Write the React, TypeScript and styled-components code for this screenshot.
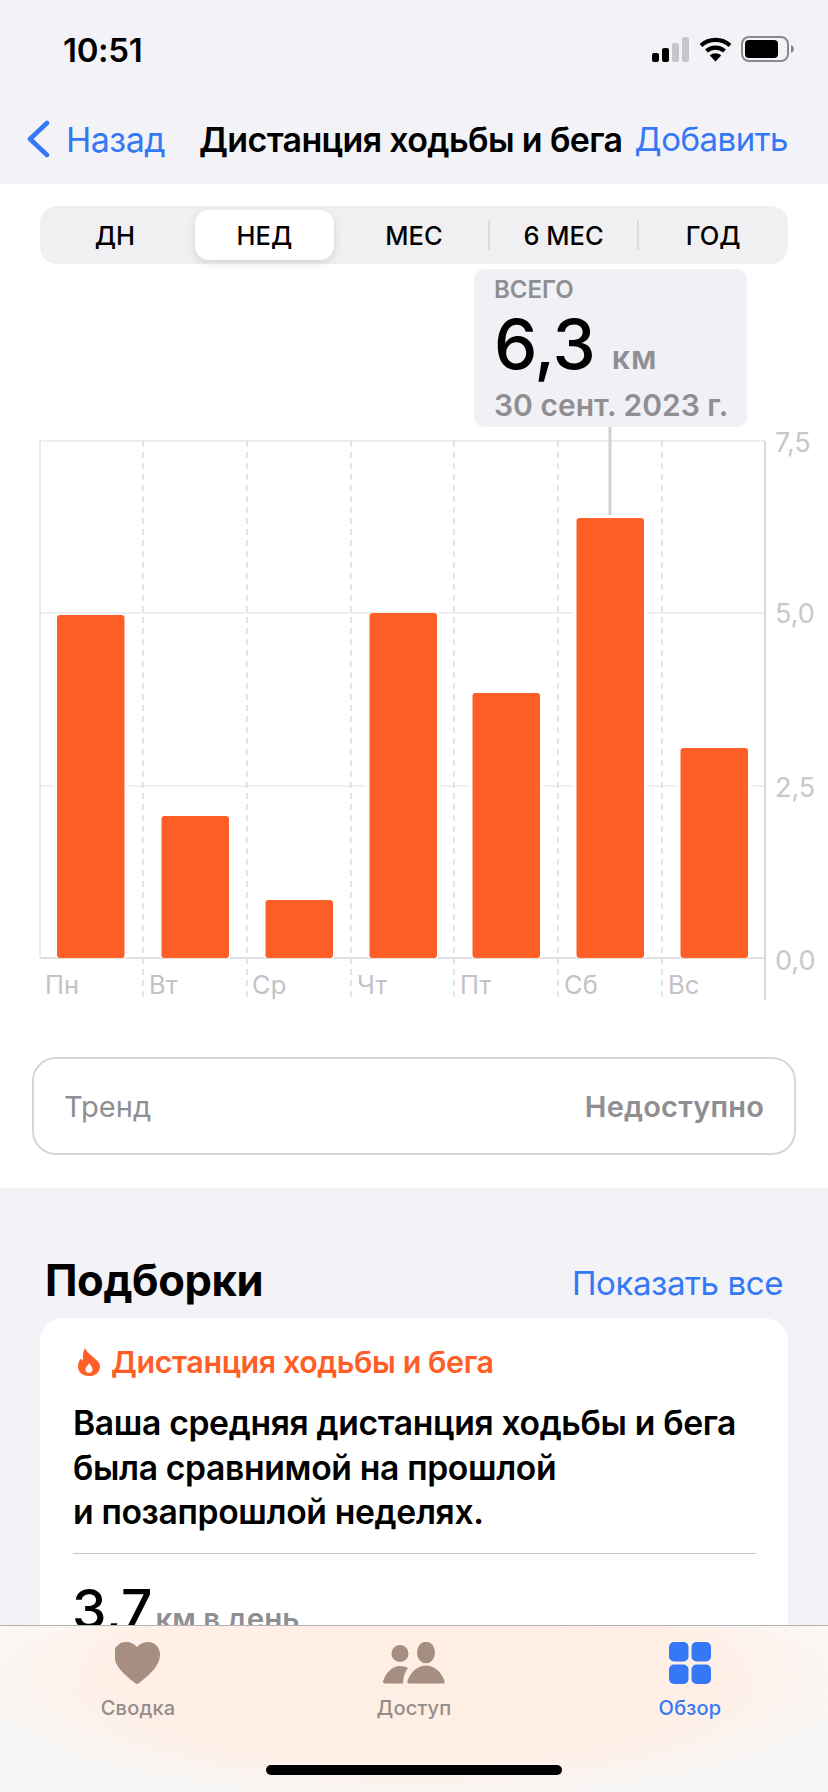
import React from "react";
import styled, { createGlobalStyle } from "styled-components";

const Global = createGlobalStyle`
  html, body { margin: 0; padding: 0; background: #f2f2f7; }
  * { box-sizing: border-box; }
`;

const font = `Inter, "Liberation Sans", sans-serif`;
const BLUE = "#3478f6";
const ORANGE = "#ff5e26";

const Page = styled.div`
  position: relative;
  width: 828px;
  height: 1792px;
  overflow: hidden;
  background: #f2f2f7;
  font-family: ${font};
  color: #000;
`;
const StatusBar = styled.div`
  height: 100px;
  padding: 0 33px 0 63px;
  display: flex;
  align-items: center;
  justify-content: space-between;
`;
const Time = styled.div`
  font-size: 33px;
  font-weight: 600;
  letter-spacing: -0.3px;
  margin-top: -1px;
`;
const StatusIcons = styled.div`
  display: flex;
  align-items: center;
  gap: 9px;
  margin-top: -2px;
`;
const NavBar = styled.div`
  height: 84px;
  padding: 0 40px 6px 26px;
  display: flex;
  align-items: center;
`;
const BackLink = styled.div`
  display: flex;
  align-items: center;
  gap: 16px;
  width: 173px;
  color: ${BLUE};
  font-size: 34px;
  letter-spacing: -0.5px;
`;
const NavTitle = styled.div`
  flex: 1;
  font-size: 34px;
  font-weight: 600;
  letter-spacing: -0.65px;
  white-space: nowrap;
`;
const NavAction = styled.div`
  color: ${BLUE};
  font-size: 33px;
  letter-spacing: -0.5px;
  white-space: nowrap;
`;
const Panel = styled.div`
  background: #fff;
  height: 1004px;
  padding-top: 22px;
`;
const Segmented = styled.div`
  margin: 0 40px;
  height: 58px;
  border-radius: 17px;
  background: #f0f0f2;
  display: grid;
  grid-template-columns: repeat(5, 1fr);
`;
const Segment = styled.div<{ $active?: boolean; $divider?: boolean }>`
  position: relative;
  margin: 4px 5px;
  display: flex;
  align-items: center;
  justify-content: center;
  font-size: 25.5px;
  font-weight: 500;
  border-radius: 14px;
  background: ${(p) => (p.$active ? "#fff" : "transparent")};
  box-shadow: ${(p) => (p.$active ? "0 3px 8px rgba(0,0,0,0.12)" : "none")};
  &::before {
    content: "";
    display: ${(p) => (p.$divider ? "block" : "none")};
    position: absolute;
    left: -6px;
    top: 10px;
    bottom: 10px;
    width: 2px;
    background: #dcdce0;
  }
`;
const ChartArea = styled.div`
  position: relative;
  height: 740px;
`;
const ChartSvg = styled.svg`
  display: block;
  width: 828px;
  height: 740px;
  font-family: ${font};
`;
const Tooltip = styled.div`
  position: absolute;
  left: 474px;
  top: 5px;
  width: 273px;
  height: 158px;
  border-radius: 10px;
  background: #f1f1f5;
  padding: 7px 20px 0;
`;
const TooltipLabel = styled.div`
  font-size: 24px;
  font-weight: 600;
  color: #8e8e93;
  line-height: 28px;
`;
const TooltipValueRow = styled.div`
  display: flex;
  align-items: baseline;
  gap: 17px;
  height: 78px;
  margin-top: 1px;
  line-height: 78px;
`;
const TooltipValue = styled.span`
  font-size: 69px;
  font-weight: 500;
  letter-spacing: -1px;
`;
const TooltipUnit = styled.span`
  font-size: 32px;
  font-weight: 600;
  color: #8e8e93;
  letter-spacing: 1px;
`;
const TooltipDate = styled.div`
  font-size: 30px;
  font-weight: 600;
  color: #8e8e93;
  line-height: 38px;
  margin-top: 3px;
  white-space: nowrap;
`;
const TrendCard = styled.div`
  margin: 53px 32px 0;
  height: 98px;
  border: 2px solid #d6d6da;
  border-radius: 24px;
  padding: 0 30px;
  display: flex;
  align-items: center;
  justify-content: space-between;
  font-size: 29px;
  color: #8e8e93;
`;
const TrendValue = styled.span`
  font-weight: 600;
  letter-spacing: 0.2px;
`;
const SectionHeader = styled.div`
  padding: 60px 45px 0;
  height: 130px;
  display: flex;
  align-items: center;
  justify-content: space-between;
`;
const SectionTitle = styled.div`
  font-size: 43.5px;
  font-weight: 700;
  letter-spacing: -0.4px;
  margin-top: -6px;
`;
const SectionLink = styled.div`
  font-size: 33px;
  color: ${BLUE};
  letter-spacing: -0.4px;
`;
const Card = styled.div`
  margin: 0 40px;
  height: 500px;
  background: #fff;
  border-radius: 24px;
  padding: 25px 32px 0 33px;
`;
const CardHeading = styled.div`
  display: flex;
  align-items: center;
  gap: 11px;
  margin-left: 5px;
  height: 38px;
  color: ${ORANGE};
  font-size: 30.4px;
  font-weight: 600;
  letter-spacing: -0.4px;
`;
const CardBody = styled.div`
  margin-top: 20px;
  font-size: 33.7px;
  font-weight: 600;
  line-height: 44.5px;
  letter-spacing: -0.35px;
  padding-bottom: 18px;
  border-bottom: 1px solid #c6c6c8;
  white-space: nowrap;
`;
const Metric = styled.div`
  display: flex;
  align-items: baseline;
  gap: 3px;
  margin: 24px 0 0 -1px;
`;
const MetricValue = styled.span`
  font-size: 55px;
  font-weight: 500;
  line-height: 62px;
`;
const MetricUnit = styled.span`
  font-size: 29.5px;
  font-weight: 600;
  color: #8e8e93;
`;
const TabBar = styled.div`
  position: absolute;
  left: 0;
  right: 0;
  bottom: 0;
  height: 167px;
  border-top: 1px solid #b4b2b0;
  background:
    radial-gradient(ellipse 440px 125px at 50% 30%, #ffeee3 0%, #ffefe6 68%, rgba(255, 240, 232, 0) 100%),
    linear-gradient(#fbf8f6, #f6f5f4);
  display: grid;
  grid-template-columns: repeat(3, 1fr);
  padding-top: 16px;
`;
const Tab = styled.div<{ $active?: boolean }>`
  display: flex;
  flex-direction: column;
  align-items: center;
  color: ${(p) => (p.$active ? BLUE : "#948d89")};
  font-size: 20px;
  font-weight: 500;
  letter-spacing: 0.2px;
`;
const TabIcon = styled.svg`
  display: block;
  height: 42px;
  margin-bottom: 12px;
`;
const HomeIndicator = styled.div`
  position: absolute;
  left: 266px;
  top: 139px;
  width: 296px;
  height: 10px;
  border-radius: 5px;
  background: #000;
`;

const Signal = () => (
  <svg width="38" height="25" viewBox="0 0 38 25">
    <rect x="0" y="16" width="7" height="9" rx="2" fill="#000" />
    <rect x="10" y="11" width="7" height="14" rx="2" fill="#000" />
    <rect x="20" y="6" width="7" height="19" rx="2" fill="#c6c6ca" />
    <rect x="30" y="0" width="7" height="25" rx="2" fill="#c6c6ca" />
  </svg>
);
const Wifi = () => (
  <svg width="33" height="25" viewBox="0 0 33 25" fill="none" stroke="#000" strokeWidth="4.2">
    <path d="M2 8.5C10 1 23 1 31 8.5" />
    <path d="M7.5 14C12.5 9.5 20.5 9.5 25.5 14" />
    <path d="M16.5 24.5L10.8 18.6C14 15.6 19 15.6 22.2 18.6Z" fill="#000" stroke="none" />
  </svg>
);
const Battery = () => (
  <svg width="54" height="26" viewBox="0 0 54 26">
    <rect x="1" y="1" width="46" height="24" rx="7" fill="none" stroke="#8a8a8e" strokeWidth="2" />
    <rect x="4" y="4" width="33" height="18" rx="4" fill="#000" />
    <path d="M50 9C52 9.8 53 11 53 13C53 15 52 16.2 50 17Z" fill="#8a8a8e" />
  </svg>
);
const Chevron = () => (
  <svg width="24" height="38" viewBox="0 0 24 38" fill="none">
    <path d="M21 3L4 19L21 35" stroke={BLUE} strokeWidth="4.6" strokeLinecap="round" strokeLinejoin="round" />
  </svg>
);
const Flame = () => (
  <svg width="22" height="28" viewBox="0 0 22 28">
    <path
      fillRule="evenodd"
      fill={ORANGE}
      d="M7 0C8.5 3.6 11 5.6 14.5 8.4C18.5 11.6 22 14.6 22 18.4C22 24 17.4 28 11 28C4.6 28 0 24 0 18.2C0 14.6 1.4 12.4 3 10.4C3.6 11.6 4.2 12.2 5 12.6C4.6 8.4 5 3.6 7 0ZM11 15C10.6 17.4 7.5 18.6 7.5 21.4C7.5 23.4 9 24.8 11 24.8C13 24.8 14.5 23.4 14.5 21.4C14.5 18.6 12.2 17.4 11 15Z"
    />
  </svg>
);
const Heart = () => (
  <TabIcon viewBox="1 0 46 42" width="46">
    <path
      fill="#a68f80"
      d="M23 42C22.2 42 21.4 41.4 20 40.2C8 31 0 22.5 0 12.5C0 5 5.2 0 12 0C17 0 20.6 2 23 5.2C25.4 2 29 0 34 0C40.8 0 46 5 46 12.5C46 22.5 38 31 26 40.2C24.6 41.4 23.8 42 23 42Z"
    />
  </TabIcon>
);
const People = () => (
  <TabIcon viewBox="0 0 62 42" width="62">
    <g fill="#a68f80">
      <circle cx="17" cy="11.5" r="8.5" />
      <ellipse cx="43" cy="10.5" rx="9" ry="10.8" />
      <path d="M2 41.5C0 41.5 -.5 40 .5 38C3 31 9 24 17 24C20 24 23 24.7 25 26C22 30 20 35 20 41.5Z" />
      <path d="M26 41.5C24 41.5 24 39.5 25 37.5C28 30 34.5 23.5 43 23.5C51.5 23.5 58 30 61 37.5C62 39.5 62 41.5 60 41.5Z" />
    </g>
  </TabIcon>
);
const Grid = () => (
  <TabIcon viewBox="0 0 42 42" width="42">
    <g fill={BLUE}>
      <rect x="0" y="0" width="19.5" height="19.5" rx="5" />
      <rect x="22.5" y="0" width="19.5" height="19.5" rx="5" />
      <rect x="0" y="22.5" width="19.5" height="19.5" rx="5" />
      <rect x="22.5" y="22.5" width="19.5" height="19.5" rx="5" />
    </g>
  </TabIcon>
);

const BASE = 958;
const bars = [
  { x: 57, top: 615, day: "Пн", labelX: 45 },
  { x: 161.5, top: 816, day: "Вт", labelX: 149 },
  { x: 265.5, top: 900, day: "Ср", labelX: 252 },
  { x: 369.5, top: 613, day: "Чт", labelX: 357 },
  { x: 472.5, top: 693, day: "Пт", labelX: 460 },
  { x: 576.5, top: 518, day: "Сб", labelX: 564 },
  { x: 680.5, top: 748, day: "Вс", labelX: 668 },
];
const dashX = [143, 247, 351, 454, 558, 662];
const gridY = [441, 613, 786];
const axis = [
  { t: "7,5", y: 452 },
  { t: "5,0", y: 623 },
  { t: "2,5", y: 797 },
  { t: "0,0", y: 970 },
];

const Chart = () => (
  <ChartSvg viewBox="0 264 828 740">
    {gridY.map((y) => (
      <line key={y} x1="40" x2="765" y1={y} y2={y} stroke="#efeff1" strokeWidth="2" />
    ))}
    <line x1="40" x2="40" y1="441" y2={BASE} stroke="#e6e6e8" strokeWidth="1.5" />
    <line x1="40" x2="765" y1={BASE} y2={BASE} stroke="#dfdfe1" strokeWidth="2" />
    {dashX.map((x) => (
      <line key={x} x1={x} x2={x} y1="441" y2="1000" stroke="#dcdcdf" strokeWidth="1.5" strokeDasharray="6 5" />
    ))}
    <line x1="765" x2="765" y1="441" y2="1000" stroke="#d9d9dc" strokeWidth="2" />
    {bars.map((b) => (
      <rect
        key={b.day}
        x={b.x}
        y={b.top}
        width="67.5"
        height={BASE - b.top}
        rx="3"
        fill={ORANGE}
        style={{ filter: "drop-shadow(3px 0 0 #fff) drop-shadow(-3px 0 0 #fff)" }}
      />
    ))}
    <line x1="610" x2="610" y1="427" y2="515" stroke="#d1d1d4" strokeWidth="3" />
    {bars.map((b) => (
      <text key={b.day} x={b.labelX} y="994" fontSize="25.5" fill="#c2c2c7">
        {b.day}
      </text>
    ))}
    {axis.map((a) => (
      <text key={a.t} x="775" y={a.y} fontSize="27" fill="#c7c7cc">
        {a.t}
      </text>
    ))}
  </ChartSvg>
);

export default function App() {
  return (
    <Page>
      <Global />
      <StatusBar>
        <Time>10:51</Time>
        <StatusIcons>
          <Signal />
          <Wifi />
          <Battery />
        </StatusIcons>
      </StatusBar>
      <NavBar>
        <BackLink>
          <Chevron />
          Назад
        </BackLink>
        <NavTitle>Дистанция ходьбы и бега</NavTitle>
        <NavAction>Добавить</NavAction>
      </NavBar>
      <Panel>
        <Segmented>
          <Segment>ДН</Segment>
          <Segment $active>НЕД</Segment>
          <Segment>МЕС</Segment>
          <Segment $divider>6 МЕС</Segment>
          <Segment $divider>ГОД</Segment>
        </Segmented>
        <ChartArea>
          <Chart />
          <Tooltip>
            <TooltipLabel>ВСЕГО</TooltipLabel>
            <TooltipValueRow>
              <TooltipValue>6,3</TooltipValue>
              <TooltipUnit>км</TooltipUnit>
            </TooltipValueRow>
            <TooltipDate>30 сент. 2023 г.</TooltipDate>
          </Tooltip>
        </ChartArea>
        <TrendCard>
          <span>Тренд</span>
          <TrendValue>Недоступно</TrendValue>
        </TrendCard>
      </Panel>
      <SectionHeader>
        <SectionTitle>Подборки</SectionTitle>
        <SectionLink>Показать все</SectionLink>
      </SectionHeader>
      <Card>
        <CardHeading>
          <Flame />
          Дистанция ходьбы и бега
        </CardHeading>
        <CardBody>
          Ваша средняя дистанция ходьбы и бега
          <br />
          была сравнимой на прошлой
          <br />и позапрошлой неделях.
        </CardBody>
        <Metric>
          <MetricValue>3,7</MetricValue>
          <MetricUnit>км в день</MetricUnit>
        </Metric>
      </Card>
      <TabBar>
        <Tab>
          <Heart />
          Сводка
        </Tab>
        <Tab>
          <People />
          Доступ
        </Tab>
        <Tab $active>
          <Grid />
          Обзор
        </Tab>
        <HomeIndicator />
      </TabBar>
    </Page>
  );
}
